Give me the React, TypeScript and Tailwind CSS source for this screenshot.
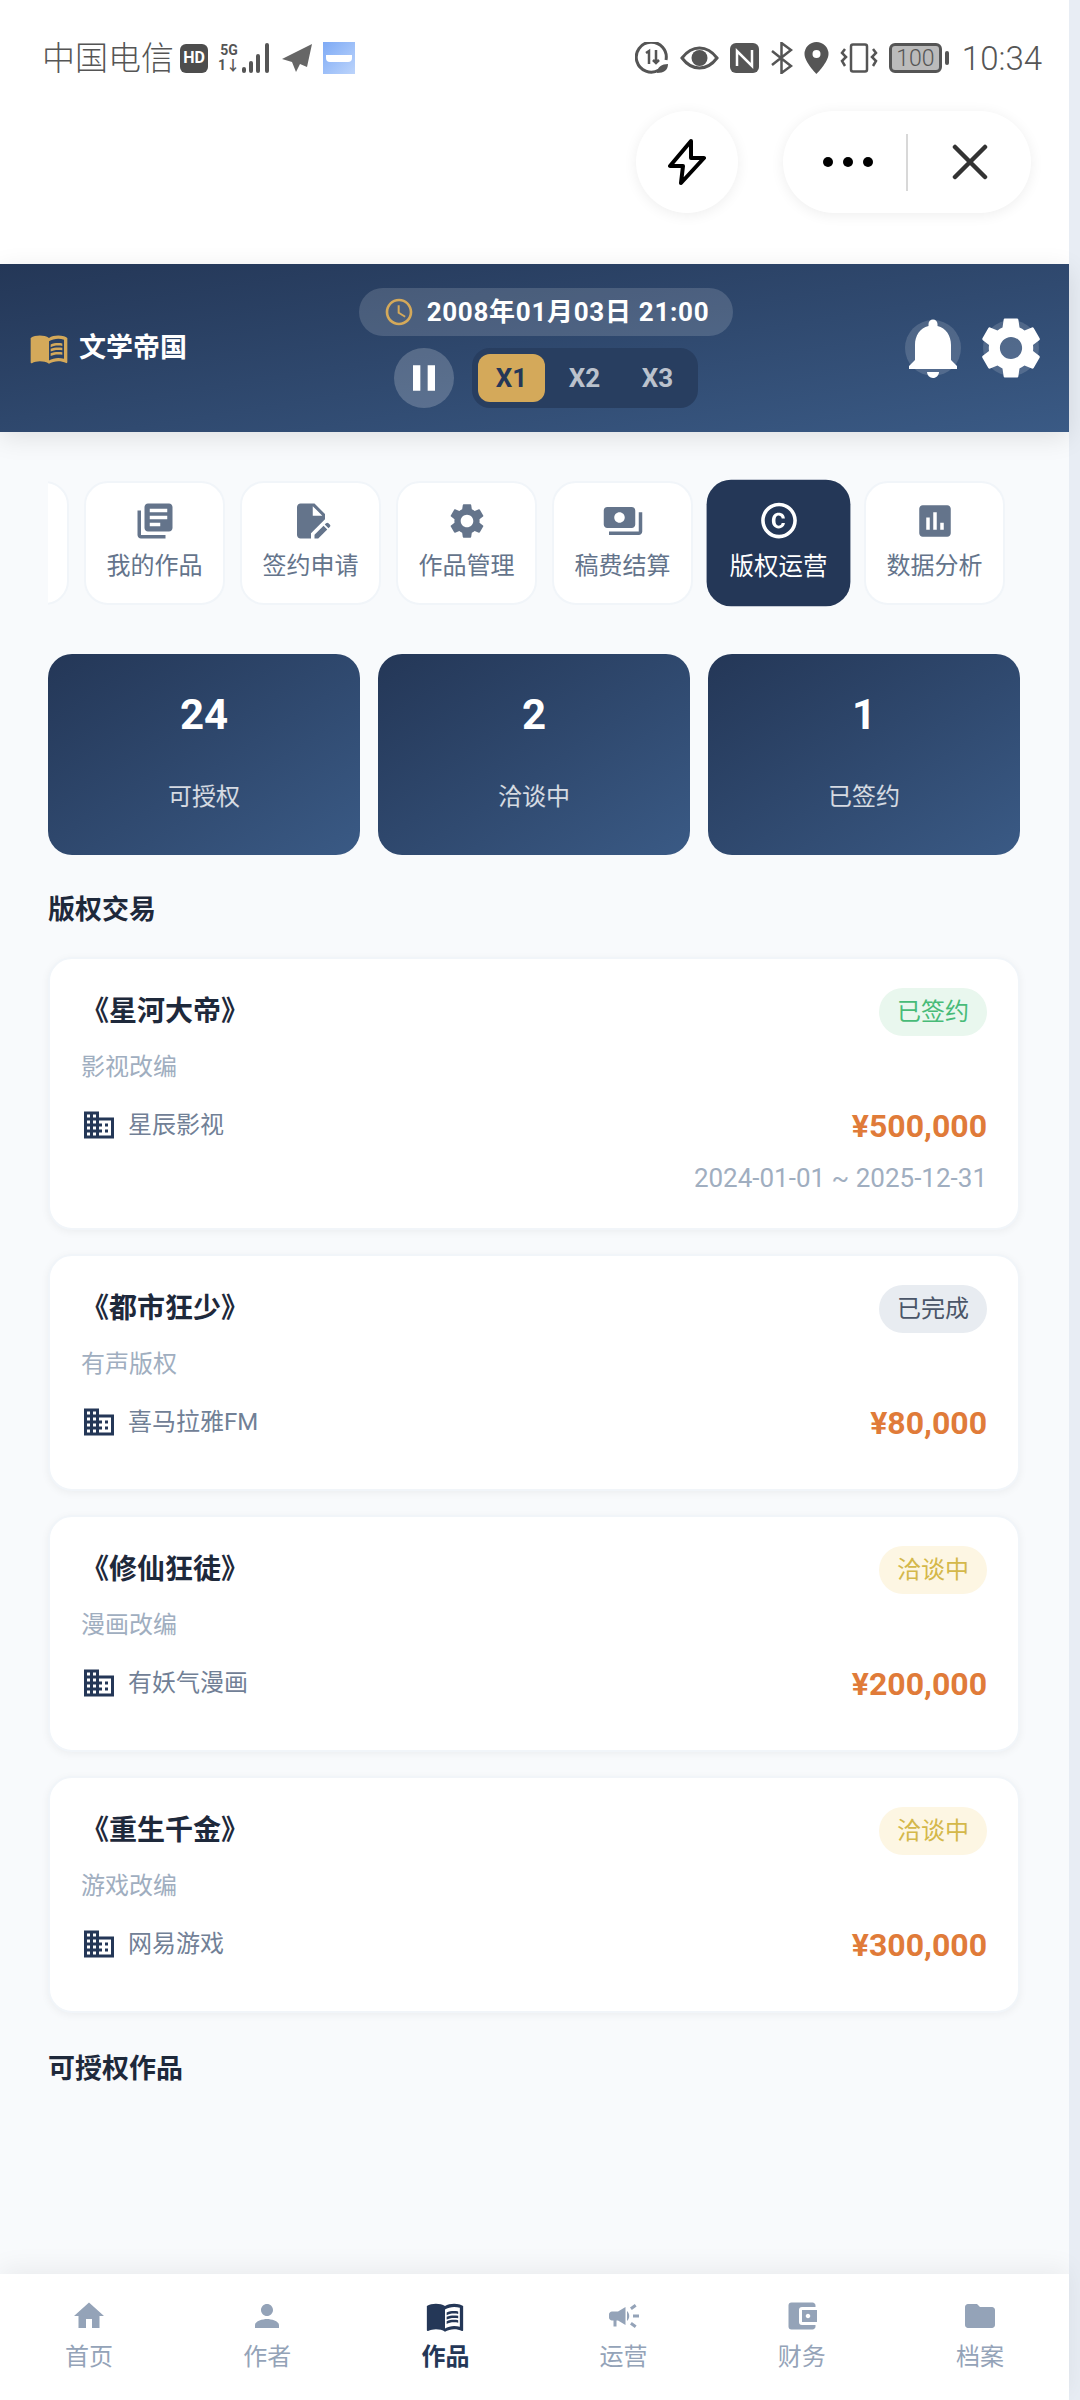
import {
    MdAccessTime, MdAccountBalanceWallet, MdAssessment, MdBusiness, MdCampaign, MdCopyright, MdEditDocument,
    MdFolder, MdHome, MdLibraryBooks, MdMenuBook, MdNotifications, MdPause, MdPayments, MdPerson, MdSettings,
} from "react-icons/md"

const font = "font-['Roboto','Noto_Sans_CJK_SC',sans-serif]"

const tabs = [
    { label: "我的作品", icon: MdLibraryBooks },
    { label: "签约申请", icon: MdEditDocument },
    { label: "作品管理", icon: MdSettings },
    { label: "稿费结算", icon: MdPayments },
    { label: "版权运营", icon: MdCopyright, active: true },
    { label: "数据分析", icon: MdAssessment },
]

const stats = [
    { value: "24", label: "可授权" },
    { value: "2", label: "洽谈中" },
    { value: "1", label: "已签约" },
]

const deals = [
    { title: "《星河大帝》", type: "影视改编", company: "星辰影视", price: "¥500,000", status: "已签约", badge: "bg-[#e9f7ee] text-[#48bb78]", period: "2024-01-01 ~ 2025-12-31" },
    { title: "《都市狂少》", type: "有声版权", company: "喜马拉雅FM", price: "¥80,000", status: "已完成", badge: "bg-[#e8ecf1] text-[#4a5568]" },
    { title: "《修仙狂徒》", type: "漫画改编", company: "有妖气漫画", price: "¥200,000", status: "洽谈中", badge: "bg-[#fdf6e3] text-[#d4b84a]" },
    { title: "《重生千金》", type: "游戏改编", company: "网易游戏", price: "¥300,000", status: "洽谈中", badge: "bg-[#fdf6e3] text-[#d4b84a]" },
]

const nav = [
    { label: "首页", icon: MdHome },
    { label: "作者", icon: MdPerson },
    { label: "作品", icon: MdMenuBook, active: true },
    { label: "运营", icon: MdCampaign },
    { label: "财务", icon: MdAccountBalanceWallet },
    { label: "档案", icon: MdFolder },
]

function StatusBar() {
    return (
        <div className="mt-[42px] flex h-[32px] items-center justify-between pl-[42px] pr-[27px] text-[#555555]">
            <div className="flex items-center">
                <span className="text-[33px] font-light leading-none">中国电信</span>
                <span className="ml-[6px] flex h-[29px] w-[28px] items-center justify-center rounded-[6px] bg-[#4d4d4d] text-[16px] font-bold leading-none text-white">HD</span>
                <div className="ml-[13px] flex w-[16px] flex-col items-center text-[14px] font-bold leading-[15px]">
                    <span>5G</span>
                    <span>1↓</span>
                </div>
                <svg width="28" height="30" viewBox="0 0 28 30" fill="#555" className="ml-[5px]">
                    <rect x="0" y="24" width="4" height="6" rx="2" />
                    <rect x="7" y="18" width="4" height="12" rx="2" />
                    <rect x="14" y="11" width="4" height="19" rx="2" />
                    <rect x="23" y="0" width="4" height="30" rx="2" />
                </svg>
                <svg width="30" height="28" viewBox="0 0 30 28" fill="#666" className="ml-[12px]">
                    <path d="M30 0 0 15l10 3 4 10 4-8 7 3z" />
                </svg>
                <div className="ml-[11px] flex h-[32px] w-[32px] items-center justify-center bg-gradient-to-br from-[#7eaaf5] to-[#bcd4fb]">
                    <div className="h-[7px] w-[26px] rounded-b-[4px] bg-white" />
                </div>
            </div>
            <div className="flex items-center gap-[11px]">
                <svg width="34" height="32" viewBox="0 0 34 32" fill="none">
                    <path d="M24 28A15 15 0 1 1 31 18" stroke="#555" strokeWidth="3" />
                    <path d="M11 11l3-2v13M21 8v13m-3-3 3 3 3-3" stroke="#555" strokeWidth="2.5" />
                    <path d="M22 31c0-6 5-9 11-9 0 6-4 9-11 9z" fill="#555" />
                </svg>
                <svg width="39" height="24" viewBox="0 0 39 24">
                    <path d="M2 12C8 4 14 2 19.500 2S31 4 37 12c-6 8-12 10-17.500 10S8 20 2 12z" fill="none" stroke="#555" strokeWidth="3" />
                    <circle cx="19.500" cy="12" r="8" fill="#555" />
                </svg>
                <svg width="29" height="30" viewBox="0 0 29 30">
                    <rect width="29" height="30" rx="6" fill="#555" />
                    <path d="M7 23V8l15 15V7" fill="none" stroke="#fff" strokeWidth="2.5" />
                </svg>
                <svg width="23" height="32" viewBox="0 0 23 32" fill="none" stroke="#555" strokeWidth="2.5">
                    <path d="M2 9l19 15-9.500 7V1L21 8 2 23" />
                </svg>
                <svg width="25" height="32" viewBox="0 0 24 32" fill="#555">
                    <path fillRule="evenodd" d="M12 0a12 12 0 0 1 12 12c0 8-12 20-12 20S0 20 0 12A12 12 0 0 1 12 0zm0 8a4 4 0 1 0 0 8 4 4 0 0 0 0-8z" />
                </svg>
                <svg width="38" height="30" viewBox="0 0 38 30" fill="none" stroke="#555" strokeWidth="2.5">
                    <rect x="11" y="1.500" width="16" height="27" rx="2" />
                    <path d="M5 6 2 10l4 4-4 4 3 5M33 6l3 4-4 4 4 4-3 5" />
                </svg>
                <div className="flex items-center gap-[3px]">
                    <span className="flex h-[30px] w-[53px] items-center justify-center rounded-[6px] border-[3px] border-[#555] bg-[#bbbbbb] text-[23px] font-light leading-none">100</span>
                    <span className="h-[14px] w-[4px] rounded-full bg-[#555]" />
                </div>
                <span className="ml-[2px] text-[33px] font-light leading-none">10:34</span>
            </div>
        </div>
    )
}

export default function App() {
    return (
        <div className={`relative flex h-[2400px] w-[1080px] flex-col overflow-hidden bg-[#f8fafc] ${font}`}>
            {/* scrollbar strip */}
            <div className="absolute right-0 top-0 h-full w-[11px] bg-[#e8edf4]" />

            <div className="flex h-[264px] w-[1069px] flex-col bg-white">
                <StatusBar />
                {/* Mini program capsule */}
                <div className="mt-[37px] flex items-center justify-end gap-[45px] pr-[38px]">
                    <div className="flex h-[102px] w-[102px] items-center justify-center rounded-full bg-white shadow-[0_2px_14px_rgba(0,0,0,0.07)]">
                        <svg width="40" height="46" viewBox="0 0 40 46" fill="none" stroke="#000" strokeWidth="4" strokeLinejoin="round">
                            <path d="M24 2 3 27h13l-2 17 23-25H24z" />
                        </svg>
                    </div>
                    <div className="flex h-[102px] w-[248px] items-center rounded-full bg-white shadow-[0_2px_14px_rgba(0,0,0,0.07)]">
                        <div className="flex flex-1 items-center justify-center gap-[10px] pl-[6px]">
                            <span className="h-[10px] w-[10px] rounded-full bg-black" />
                            <span className="h-[10px] w-[10px] rounded-full bg-black" />
                            <span className="h-[10px] w-[10px] rounded-full bg-black" />
                        </div>
                        <div className="h-[57px] w-[2px] bg-[#d8d8d8]" />
                        <div className="flex w-[123px] items-center justify-center">
                            <svg width="36" height="36" viewBox="0 0 36 36" stroke="#333" strokeWidth="4.500" strokeLinecap="round">
                                <path d="M3 3l30 30M33 3 3 33" />
                            </svg>
                        </div>
                    </div>
                </div>
            </div>

            {/* Game header */}
            <div className="relative flex h-[168px] w-[1069px] items-center justify-between bg-gradient-to-br from-[#243757] to-[#3a5a85] pl-[29px] pr-[30px] shadow-[0_6px_24px_rgba(0,0,0,0.1)]">
                <div className="flex items-center gap-[10px]">
                    <MdMenuBook size={40} color="#d4a95a" />
                    <span className="text-[27px] font-bold text-white">文学帝国</span>
                </div>
                <div className="absolute left-[359px] top-[24px] flex w-[374px] flex-col items-center gap-[12px]">
                    <div className="flex h-[48px] w-full items-center justify-center gap-[12px] rounded-[24px] bg-white/15">
                        <MdAccessTime size={32} color="#d4a95a" />
                        <span className="text-[26px] font-bold tracking-[0.7px] text-white">2008年01月03日 21:00</span>
                    </div>
                    <div className="flex items-center gap-[18px]">
                        <div className="flex h-[60px] w-[60px] items-center justify-center rounded-full bg-white/20">
                            <MdPause size={44} color="#fff" />
                        </div>
                        <div className="flex h-[60px] w-[226px] items-center gap-[6px] rounded-[18px] bg-[#283e60] px-[6px]">
                            <div className="flex h-[48px] w-[67px] items-center justify-center rounded-[12px] bg-[#d4a95a] text-[26px] font-bold text-[#243757]">X1</div>
                            <div className="flex h-[48px] w-[67px] items-center justify-center text-[26px] font-bold text-white/70">X2</div>
                            <div className="flex h-[48px] w-[67px] items-center justify-center text-[26px] font-bold text-white/70">X3</div>
                        </div>
                    </div>
                </div>
                <div className="flex items-center gap-[22px]">
                    <div className="flex h-[56px] w-[56px] items-center justify-center rounded-full bg-white/15">
                        <MdNotifications size={72} color="#fff" className="shrink-0" />
                    </div>
                    <div className="flex h-[56px] w-[56px] items-center justify-center rounded-full bg-white/15">
                        <MdSettings size={74} color="#fff" className="shrink-0" />
                    </div>
                </div>
            </div>

            {/* Tabs */}
            <div className="ml-[48px] mt-[46px] flex h-[130px] w-[972px] items-center gap-[15px] overflow-hidden">
                <div className="ml-[-120px] h-[124px] w-[141px] shrink-0 rounded-[24px] border-2 border-[#f1f5f9] bg-white" />
                {tabs.map((t) => (
                    <div
                        key={t.label}
                        className={
                            t.active
                                ? "flex h-[124px] w-[141px] shrink-0 scale-[1.02] flex-col items-center justify-center gap-[8px] rounded-[24px] bg-[#243757] pb-[4px] text-white"
                                : "flex h-[124px] w-[141px] shrink-0 flex-col items-center justify-center gap-[8px] rounded-[24px] border-2 border-[#f1f5f9] bg-white pb-[4px] text-[#64748b]"
                        }
                    >
                        <t.icon size={42} />
                        <span className="text-[24px] leading-[32px]">{t.label}</span>
                    </div>
                ))}
            </div>

            {/* Stats */}
            <div className="ml-[48px] mt-[46px] grid w-[972px] grid-cols-3 gap-[18px]">
                {stats.map((s) => (
                    <div key={s.label} className="flex h-[201px] flex-col items-center rounded-[24px] bg-gradient-to-br from-[#243757] to-[#3a5a85] pt-[36px]">
                        <span className="text-[42px] font-bold leading-[50px] text-white">{s.value}</span>
                        <span className="mt-[40px] text-[24px] leading-[34px] text-white/80">{s.label}</span>
                    </div>
                ))}
            </div>

            <h2 className="ml-[48px] mt-[36px] text-[27px] font-bold leading-[38px] text-[#1e293b]">版权交易</h2>

            {/* Deals */}
            <div className="ml-[48px] mt-[28px] flex w-[972px] flex-col gap-[24px]">
                {deals.map((d) => (
                    <div key={d.title} className="flex flex-col rounded-[24px] border-2 border-[#f1f5f9] bg-white px-[31px] pb-[32px] pt-[29px] shadow-[0_2px_8px_rgba(0,0,0,0.05)]">
                        <div className="flex h-[48px] items-center justify-between">
                            <span className="text-[28px] font-bold text-[#1e293b]">{d.title}</span>
                            <span className={`flex h-[48px] items-center rounded-[24px] px-[18px] text-[24px] ${d.badge}`}>{d.status}</span>
                        </div>
                        <div className="mt-[14px] text-[24px] leading-[34px] text-[#a0aec0]">{d.type}</div>
                        <div className="mb-[12px] mt-[18px] flex h-[46px] items-center justify-between">
                            <div className="flex items-center gap-[11px]">
                                <MdBusiness size={36} color="#243757" />
                                <span className="text-[24px] text-[#718096]">{d.company}</span>
                            </div>
                            <span className="mt-[2px] text-[32px] font-bold text-[#e07b39]">{d.price}</span>
                        </div>
                        {d.period && <div className="text-right text-[26px] leading-[36px] text-[#a0aec0]">{d.period}</div>}
                    </div>
                ))}
            </div>

            <h2 className="ml-[48px] mt-[37px] text-[27px] font-bold leading-[38px] text-[#1e293b]">可授权作品</h2>

            {/* Bottom nav */}
            <div className="absolute bottom-0 left-0 flex h-[126px] w-[1069px] items-start bg-white pt-[24px] shadow-[0_-6px_24px_rgba(0,0,0,0.06)]">
                {nav.map((n) => (
                    <div key={n.label} className={`flex flex-1 flex-col items-center gap-[6px] ${n.active ? "text-[#243757]" : "text-[#94a3b8]"}`}>
                        <n.icon size={36} className={n.active ? "scale-110" : ""} />
                        <span className={`text-[24px] leading-[34px] ${n.active ? "font-bold" : ""}`}>{n.label}</span>
                    </div>
                ))}
            </div>
        </div>
    )
}
